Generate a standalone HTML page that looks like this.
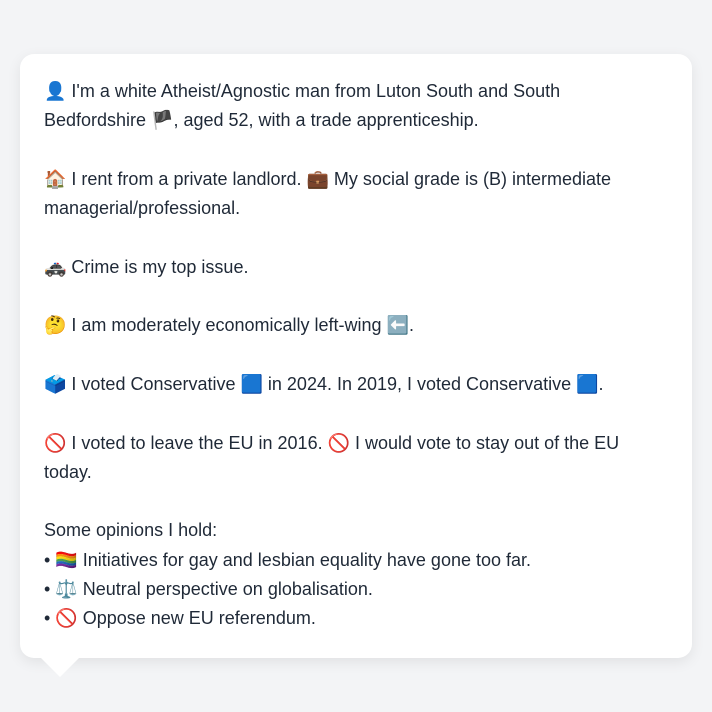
<!DOCTYPE html>
<html><head><meta charset="utf-8"><style>
html,body{margin:0;padding:0;background:#f3f4f6;width:712px;height:712px;overflow:hidden}
.card{position:absolute;left:20px;top:54px;width:672px;height:604px;background:#fff;border-radius:14px;box-shadow:0 4px 14px rgba(0,0,0,0.08);box-sizing:border-box;padding:23px 52px 23px 24px;font-family:"Liberation Sans","Noto Sans CJK JP",sans-serif;font-size:18px;line-height:29.3px;color:#1f2937}
.tail{position:absolute;left:40px;top:657px;width:0;height:0;border-left:20px solid transparent;border-right:20px solid transparent;border-top:20px solid #fff}
</style></head><body>
<div class="card">👤 I'm a white Atheist/Agnostic man from Luton South and South Bedfordshire 🏴, aged 52, with a trade apprenticeship.<br><br>🏠 I rent from a private landlord. 💼 My social grade is (B) intermediate managerial/professional.<br><br>🚓 Crime is my top issue.<br><br>🤔 I am moderately economically left-wing ⬅️.<br><br>🗳️ I voted Conservative 🟦 in 2024. In 2019, I voted Conservative 🟦.<br><br>🚫 I voted to leave the EU in 2016. 🚫 I would vote to stay out of the EU today.<br><br>Some opinions I hold:<br>• 🏳️‍🌈 Initiatives for gay and lesbian equality have gone too far.<br>• ⚖️ Neutral perspective on globalisation.<br>• 🚫 Oppose new EU referendum.</div>
<div class="tail"></div>
</body></html>
